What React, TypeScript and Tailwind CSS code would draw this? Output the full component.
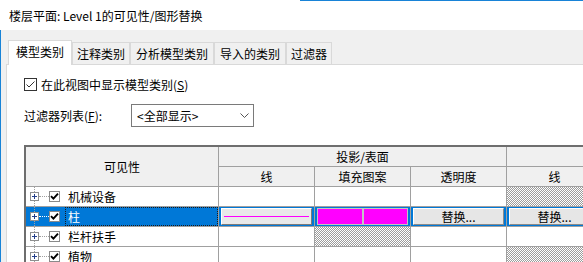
import React from 'react'

const hatch =
  'bg-[image:repeating-conic-gradient(#9c9c9c_0%_25%,#ffffff_0%_50%)] bg-[length:2px_2px]'

function PlusBox() {
  return (
    <div className="flex h-[9px] w-[9px] shrink-0 items-center justify-center border border-[#8e8f8f] bg-white">
      <svg width="5" height="5" viewBox="0 0 5 5">
        <path d="M0 2.5H5M2.5 0V5" stroke="#24408a" strokeWidth="1" />
      </svg>
    </div>
  )
}

function TreeCheck() {
  return (
    <div className="flex h-[11px] w-[11px] shrink-0 items-center justify-center border border-[#8a8a8a] bg-white">
      <svg width="9" height="9" viewBox="0 0 9 9">
        <path d="M1 4.2L3.4 6.6L8 1.6" fill="none" stroke="#000" strokeWidth="1.9" />
      </svg>
    </div>
  )
}

function TreeCell({ label, selected }: { label: string; selected?: boolean }) {
  return (
    <div
      className={
        selected
          ? 'flex h-full items-center bg-[#0078d7] pl-[4px] text-white'
          : 'flex h-full items-center bg-white pl-[4px] text-black'
      }
    >
      {/* 树线 + 展开框 */}
      <div className="flex h-full w-[9px] flex-col items-center">
        <div className="w-0 flex-1 border-l border-dotted border-[#a0a0a0]" />
        <PlusBox />
        <div className="w-0 flex-1 border-l border-dotted border-[#a0a0a0]" />
      </div>
      <div
        className={
          selected
            ? 'h-0 w-[10px] border-t border-dotted border-white'
            : 'h-0 w-[10px] border-t border-dotted border-[#a0a0a0]'
        }
      />
      <TreeCheck />
      <div
        className={
          selected
            ? 'ml-[5px] flex h-full flex-1 items-center border border-dotted border-[#1a1a1a] pl-[2px]'
            : 'ml-[5px] flex h-full flex-1 items-center border border-transparent pl-[2px]'
        }
      >
        {label}
      </div>
    </div>
  )
}

function HeadCell({ children, className = '' }: { children?: React.ReactNode; className?: string }) {
  return (
    <div className={'flex items-center justify-center bg-[#f0f0f0] text-black ' + className}>
      {children}
    </div>
  )
}

function ReplaceButton() {
  return (
    <div className="flex h-full items-center bg-[#0078d7] px-[2px] py-px">
      <div className="flex h-full w-full items-center justify-center border border-t-white border-l-white border-r-[#8a8a8a] border-b-[#8a8a8a] bg-[#e6e6e6] text-black">
        替换...
      </div>
    </div>
  )
}

export default function App() {
  const tabs = [
    { label: '注释类别', w: 'w-[58px]' },
    { label: '分析模型类别', w: 'w-[84px]' },
    { label: '导入的类别', w: 'w-[72px]' },
    { label: '过滤器', w: 'w-[46px]' },
  ]

  return (
    <div className="flex h-[262px] w-[583px] flex-col overflow-hidden bg-white font-['Noto_Sans_CJK_SC','Microsoft_YaHei',sans-serif] text-xs text-black">
      {/* 标题栏 */}
      <div className="flex h-[30px] shrink-0 flex-col">
        <div className="ml-[300px] h-px bg-[#1883d7]" />
        <div className="flex flex-1 items-center pl-[9px] text-[12px]">楼层平面: Level 1的可见性/图形替换</div>
      </div>

      <div className="flex flex-1 flex-col border-l border-[#1883d7] bg-[#f0f0f0] pl-[5px] pt-[10px]">
        {/* 选项卡 */}
        <div className="ml-[2px] flex h-[24px] shrink-0 items-end">
          <div className="relative z-10 -mb-px flex h-[25px] w-[64px] items-center border border-b-0 border-[#d9d9d9] bg-white pb-[2px] pl-[7px]">
            模型类别
          </div>
          {tabs.map((t) => (
            <div
              key={t.label}
              className={
                'flex h-[22px] items-center justify-center border border-b-0 border-[#d9d9d9] bg-[#f0f0f0] ' + t.w
              }
            >
              {t.label}
            </div>
          ))}
        </div>

        <div className="flex flex-1 flex-col border-l border-t border-[#d9d9d9] bg-white pl-[17px]">
          <div className="mt-[13px] flex h-[13px] items-center gap-[4px]">
            <div className="flex h-[13px] w-[13px] items-center justify-center border border-[#333]">
              <svg width="11" height="11" viewBox="0 0 11 11">
                <path d="M1.5 5.5L4 8L9.5 2.5" fill="none" stroke="#333" strokeWidth="1" />
              </svg>
            </div>
            <span>
              在此视图中显示模型类别(<span className="underline">S</span>)
            </span>
          </div>

          <div className="mt-[13px] flex items-center">
            <span className="w-[107px]">
              过滤器列表(<span className="underline">F</span>):
            </span>
            <div className="flex h-[23px] w-[123px] items-center justify-between border border-[#7a7a7a] bg-white pl-[5px] pr-[4px]">
              <span>&lt;全部显示&gt;</span>
              <svg width="9" height="5" viewBox="0 0 9 5">
                <path d="M0.5 0.5L4.5 4.5L8.5 0.5" fill="none" stroke="#555" strokeWidth="1" />
              </svg>
            </div>
          </div>

          {/* 类别表 */}
          <div className="mt-[18px] w-max border-l-2 border-t-2 border-[#6e6e6e]">
            <div className="grid grid-cols-[192px_95px_95px_95px_95px] grid-rows-[19px_19px_19px_19px_19px_19px] gap-px bg-[#a0a0a0]">
              <HeadCell className="row-span-2">可见性</HeadCell>
              <HeadCell className="col-span-3">投影/表面</HeadCell>
              <HeadCell />
              <HeadCell>线</HeadCell>
              <HeadCell>填充图案</HeadCell>
              <HeadCell>透明度</HeadCell>
              <HeadCell>线</HeadCell>

              <TreeCell label="机械设备" />
              <div className="bg-white" />
              <div className="bg-white" />
              <div className="bg-white" />
              <div className={hatch} />

              <TreeCell label="柱" selected />
              <div className="flex h-full items-center bg-[#0078d7] px-[2px] py-px">
                <div className="flex h-full w-full items-center border border-t-white border-l-white border-r-[#7a7a7a] border-b-[#7a7a7a] bg-[#e9e9e9] px-[2px]">
                  <div className="h-px w-full bg-[#ff00ff]" />
                </div>
              </div>
              <div className="flex h-full items-stretch bg-[#0078d7] px-[2px] py-px">
                <div className="flex-1 border border-[#c4c4c4] bg-[#ff00ff]" />
                <div className="flex-1 border border-[#c4c4c4] bg-[#ff00ff]" />
              </div>
              <ReplaceButton />
              <ReplaceButton />

              <TreeCell label="栏杆扶手" />
              <div className="bg-white" />
              <div className={hatch} />
              <div className="bg-white" />
              <div className="bg-white" />

              <TreeCell label="植物" />
              <div className="bg-white" />
              <div className="bg-white" />
              <div className="bg-white" />
              <div className={hatch} />
            </div>
          </div>
        </div>
      </div>
    </div>
  )
}
